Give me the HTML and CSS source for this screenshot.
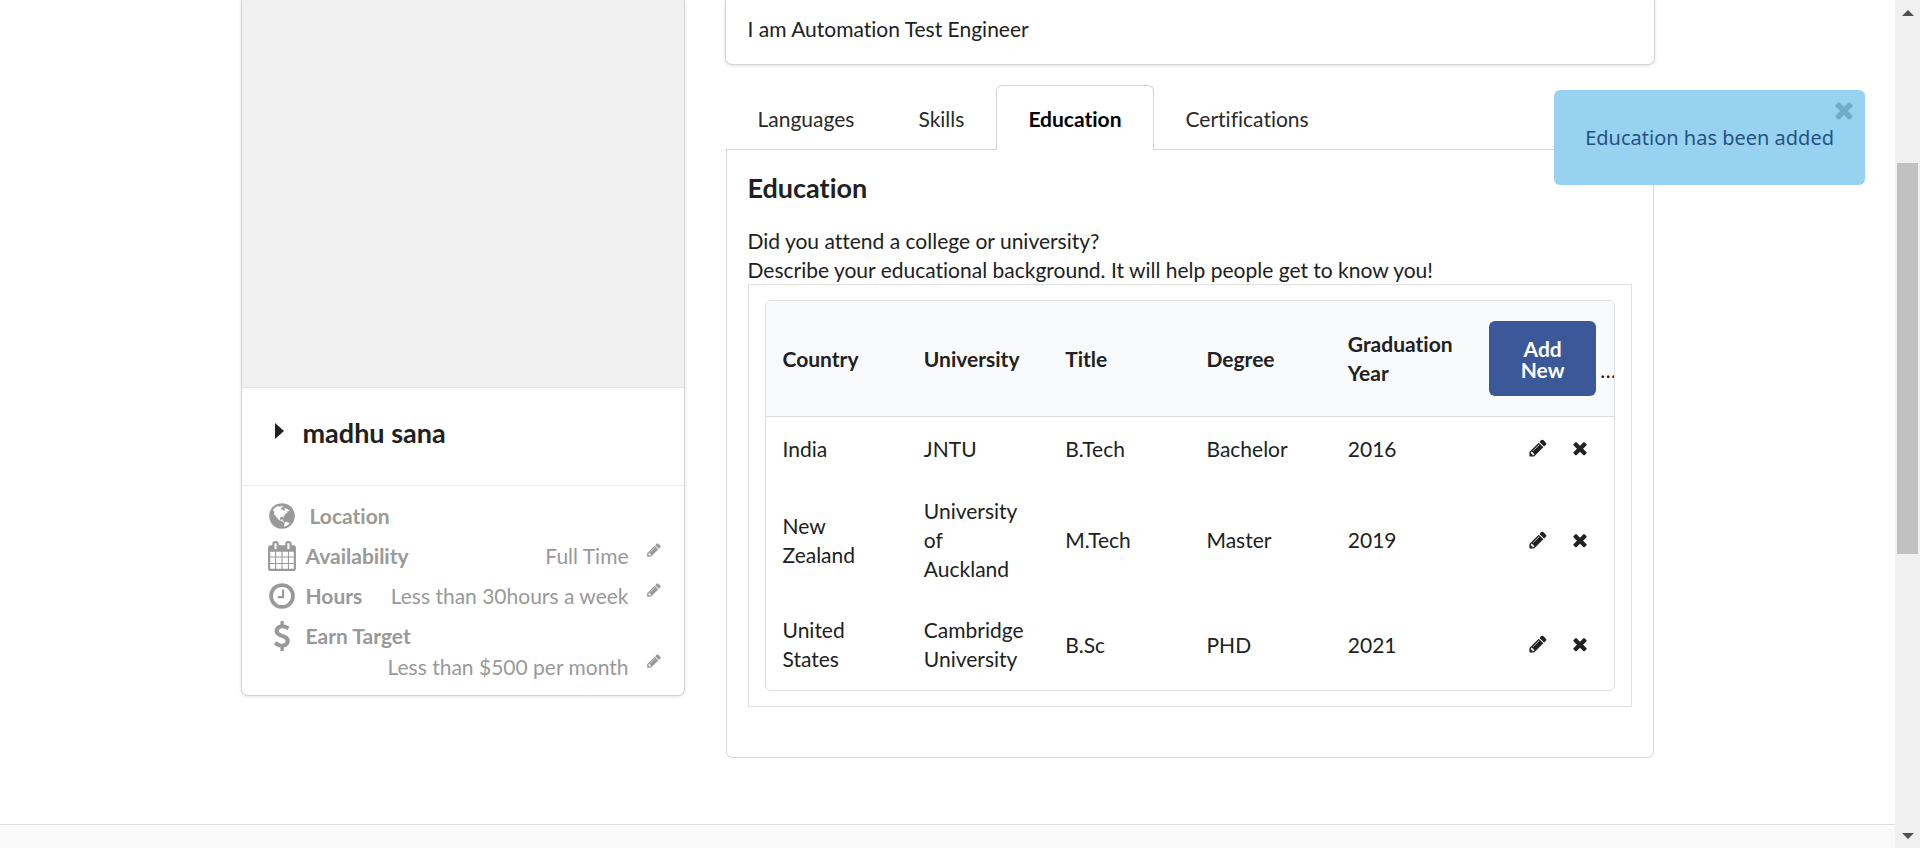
FILE: index.html
```html
<!DOCTYPE html>
<html lang="en">
<head>
<meta charset="utf-8">
<title>Profile</title>
<link rel="stylesheet" href="styles.css">
</head>
<body>
<svg class="sprite" aria-hidden="true">
  <symbol id="pencil" viewBox="0 0 1792 1792"><path d="M491 1536l91-91-235-235-91 91v107h128v128h107zm523-928q0-22-22-22-10 0-17 7l-542 542q-7 7-7 17 0 22 22 22 10 0 17-7l542-542q7-7 7-17zm-54-192l416 416-832 832h-416v-416zm683 96q0 53-37 90l-166 166-416-416 166-165q36-38 90-38 53 0 91 38l235 234q37 39 37 91z"/></symbol>
  <symbol id="close" viewBox="0 0 1792 1792"><path d="M1490 1322q0 40-28 68l-136 136q-28 28-68 28t-68-28l-294-294-294 294q-28 28-68 28t-68-28l-136-136q-28-28-28-68t28-68l294-294-294-294q-28-28-28-68t28-68l136-136q28-28 68-28t68 28l294 294 294-294q28-28 68-28t68 28l136 136q28 28 28 68t-28 68l-294 294 294 294q28 28 28 68z"/></symbol>
  <symbol id="clock" viewBox="0 0 1792 1792"><path d="M1024 544v448q0 14-9 23t-23 9h-320q-14 0-23-9t-9-23v-64q0-14 9-23t23-9h224v-352q0-14 9-23t23-9h64q14 0 23 9t9 23zm416 352q0-148-73-273t-198-198-273-73-273 73-198 198-73 273 73 273 198 198 273 73 273-73 198-198 73-273zm224 0q0 209-103 385.5t-279.5 279.5-385.5 103-385.5-103-279.5-279.5-103-385.5 103-385.5 279.5-279.5 385.5-103 385.5 103 279.5 279.5 103 385.5z"/></symbol>
  <symbol id="calendar" viewBox="0 0 1792 1792"><path d="M192 1664h288v-288h-288v288zm352 0h320v-288h-320v288zm-352-352h288v-320h-288v320zm352 0h320v-320h-320v320zm-352-384h288v-288h-288v288zm736 736h320v-288h-320v288zm-384-736h320v-288h-320v288zm768 736h288v-288h-288v288zm-384-352h320v-320h-320v320zm-352-864v-288q0-13-9.500-22.500t-22.500-9.500h-64q-13 0-22.500 9.500t-9.500 22.500v288q0 13 9.500 22.500t22.500 9.500h64q13 0 22.500-9.500t9.500-22.500zm736 864h288v-320h-288v320zm-384-384h320v-288h-320v288zm384 0h288v-288h-288v288zm32-480v-288q0-13-9.500-22.500t-22.500-9.500h-64q-13 0-22.500 9.500t-9.500 22.500v288q0 13 9.500 22.500t22.500 9.500h64q13 0 22.500-9.500t9.500-22.500zm384-64v1280q0 52-38 90t-90 38h-1408q-52 0-90-38t-38-90v-1280q0-52 38-90t90-38h128v-96q0-66 47-113t113-47h64q66 0 113 47t47 113v96h384v-96q0-66 47-113t113-47h64q66 0 113 47t47 113v96h128q52 0 90 38t38 90z"/></symbol>
  <symbol id="dollar" viewBox="0 0 1792 1792"><path d="M1362 1185q0 153-99.5 263.5t-258.5 136.500v175q0 14-9 23t-23 9h-135q-13 0-22.500-9.500t-9.500-22.500v-175q-66-9-127.500-31t-101.500-44.500-74-48-46.500-37.500-17.500-18q-17-21-2-41l103-135q7-10 23-12 15-2 24 9l2 2q113 99 243 125 37 8 74 8 81 0 142.500-43t61.500-122q0-28-15-53t-33.500-42-58.500-37.500-66-32-80-32.500q-39-16-61.500-25t-61.500-26.500-62.500-31-56.500-35.500-53.500-42.500-43.500-49-35.500-58-21-66.500-8.500-78q0-138 98-242t255-134v-180q0-13 9.500-22.500t22.500-9.500h135q14 0 23 9t9 23v176q57 6 110.500 23t87 33.500 63.500 37.500 39 29 15 14q17 18 5 38l-81 146q-8 15-23 16-14 3-27-7-3-3-14.500-12t-39-26.500-58.500-32-74.500-26-85.500-11.500q-95 0-155 43t-60 111q0 26 8.500 48t29.500 41.500 39.500 33 56 31 60.500 27 70 27.500q53 20 81 31.500t76 35 75.500 42.500 62 50 53 63.500 31.500 76.500 13 94z"/></symbol>
  <symbol id="globe" viewBox="0 0 1792 1792"><path d="M896 128q209 0 385.500 103t279.500 279.500 103 385.500-103 385.500-279.500 279.500-385.500 103-385.500-103-279.500-279.500-103-385.500 103-385.500 279.500-279.500 385.500-103zm274 521q-2 1-9.500 9.500t-13.500 9.500q2 0 4.500-5t5-11 3.500-7q6-7 22-15 14-6 52-12 34-8 51 11-2-2 9.500-13t14.500-12q3-2 15-4.500t15-7.500l2-22q-12 1-17.500-7t-6.500-21q0 2-6 8 0-7-4.500-8t-11.500 1-9 1q-10-3-15-7.500t-8-16.500-4-15q-2-5-9.500-11t-9.500-10q-1-2-2.500-5.500t-3-6.500-4-5.500-5.500-2.500-7 5-7.500 10-4.500 5q-3-2-6-1.500t-4.500 1-4.500 3-5 3.500q-3 2-8.500 3t-8.500 2q15-5-1-11-10-4-16-3 9-4 7.500-12t-8.500-14h5q-1-4-8.500-8.500t-17.500-8.500-13-6q-8-5-34-9.500t-33-.5q-5 6-4.500 10.500t4 14 3.500 12.500q1 6-5.500 13t-6.500 12q0 7 14 15.500t10 21.500q-3 8-16 16t-16 12q-5 8-1.500 18.500t10.500 16.500q2 2 1.500 4t-3.500 4.500-5.500 4-6.500 3.500l-3 2q-11 5-20.500-6t-13.500-26q-7-25-16-30-23-8-29 1-5-13-41-26-25-9-58-4 6-1 0-15-7-15-19-12 3-6 4-17.500t1-13.500q3-13 12-23 1-1 7-8.500t9.500-13.500.5-6q35 4 50-11 5-5 11.500-17t10.500-17q9-6 14-5.500t14.500 5.500 14.500 5q14 1 15.500-11t-7.500-20q12 1 3-17-4-7-8-9-12-4-27 5-8 4 2 8-1-1-9.500 10.500t-16.500 17.500-16-5q-1-1-5.500-13.500t-9.500-13.500q-8 0-16 15 3-8-11-15t-24-8q19-12-8-27-7-4-20.500-5t-19.500 4q-5 7-5.500 11.500t5 8 10.500 5.500 11.500 4 8.500 3q14 10 8 14-2 1-8.500 3.500t-11.500 4.500-6 4q-3 4 0 14t-2 14q-5-5-9-17.500t-7-16.500q7 9-25 6l-10-1q-4 0-16 2t-20.500 1-13.500-8q-4-8 0-20 1-4 4-2-4-3-11-9.500t-10-8.500q-46 15-94 41 6 1 12-1 5-2 13-6.500t10-5.500q34-14 42-7l5-5q14 16 20 25-7-4-30-1-20 6-22 12 7 12 5 18-4-3-11.500-10t-14.500-11-15-5q-16 0-22 1-146 80-235 222 7 7 12 8 4 1 5 9t2.500 11 11.500-3q9 8 3 19 1-1 44 27 19 17 21 21 3 11-10 18-1-2-9-9t-9-4q-3 5 .5 18.500t10.500 12.500q-7 0-9.500 16t-2.500 35.500-1 23.500l2 1q-3 12 5.500 34.500t21.500 19.500q-13 3 20 43 6 8 8 9 3 2 12 7.500t15 10 10 10.500q4 5 10 22.500t14 23.500q-2 6 9.500 20t10.500 23q-1 0-2.500 1t-2.500 1q3 7 15.500 14t15.500 13q1 3 2 10t3 11 8 2q2-20-24-62-15-25-17-29-3-5-5.500-15.500t-4.500-14.500q2 0 6 1.500t8.500 3.500 7.500 4 2 3q-3 7 2 17.500t12 18.500 17 19 12 13q6 6 14 19.500t0 13.500q9 0 20 10.500t17 19.500q5 8 8 26t5 24q2 7 8.500 13.500t12.500 9.500l16 8 13 7q5 2 18.500 10.500t21.500 11.500q10 4 16 4t14.500-2.500 13.500-3.500q15-2 29 15t21 21q36 19 55 11-2 1 .5 7.500t8 15.500 9 14.500 5.500 8.500q5 6 18 15t18 15q6-4 7-9-3 8 7 20t18 10q14-3 14-32-31 15-49-18 0-1-2.500-5.500t-4-8.500-2.500-8.500 0-7.500 5-3q9 0 10-3.500t-2-12.500-4-13q-1-8-11-20t-12-15q-5 9-16 8t-16-9q0 1-1.500 5.500t-1.500 6.500q-13 0-15-1 1-3 2.500-17.500t3.500-22.500q1-4 5.500-12t7.500-14.500 4-12.500-4.500-9.500-17.500-2.500q-19 1-26 20-1 3-3 10.500t-5 11.500-9 7q-7 3-24 2t-24-5q-13-8-22.500-29t-9.500-37q0-10 2.500-26.500t3-25-5.500-24.500q3-2 9-9.500t10-10.500q2-1 4.500-1.500t4.500 0 4-1.500 3-6q-1-1-4-3-3-3-4-3 7 3 28.500-1.500t27.500 1.500q15 11 22-2 0-1-2.500-9.500t-.5-13.500q5 27 29 9 3 3 15.500 5t17.500 5q3 2 7 5.500t5.500 4.500 5-.5 8.500-6.500q10 14 12 24 11 40 19 44 7 3 11 2t4.500-9.500 0-14-1.500-12.500l-1-8v-18l-1-8q-15-3-18.500-12t1.500-18.500 15-18.500q1-1 8-3.500t15.500-6.500 12.500-8q21-19 15-35 7 0 11-9-1 0-5-3t-7.500-5-4.500-2q9-5 2-16 5-3 7.500-11t7.500-10q9 12 21 2 7-8 1-16 5-7 20.500-10.500t18.500-9.500q7 2 8-2t1-12 3-12q4-5 15-9t13-5l17-11q3-4 0-4 18 2 31-11 10-11-6-20 3-6-3-9.500t-15-5.500q3-1 11.500-.5t10.500-1.500q15-10-7-16-17-5-43 12zm-163 877q206-36 351-189-3-3-12.500-4.500t-12.500-3.500q-18-7-24-8 1-7-2.500-13t-8-9-12.500-8-11-7q-2-2-7-6t-7-5.500-7.500-4.500-8.500-2-10 1l-3 1q-3 1-5.500 2.500t-5.500 3-4 3 0 2.500q-21-17-36-22-5-1-11-5.500t-10.500-7-10-1.500-11.500 7q-5 5-6 15t-2 13q-7-5 0-17.500t2-18.500q-3-6-10.500-4.500t-12 4.500-11.500 8.500-9 6.500-8.500 5.500-8.500 7.500q-3 4-6 12t-5 11q-2-4-11.500-6.500t-9.500-5.500q2 10 4 35t5 38q7 31-12 48-27 25-29 40-4 22 12 26 0 7-8 20.500t-7 21.500q0 6 2 16z"/></symbol>
</svg>

<div class="page">
  <main class="container">
    <section class="card profile">
      <div class="photo"></div>
      <div class="name"><span class="caret"></span><h2>madhu sana</h2></div>
      <ul class="details">
        <li class="location"><svg class="icon"><use href="#globe"/></svg><strong>Location</strong></li>
        <li><svg class="icon"><use href="#calendar"/></svg><strong>Availability</strong><span class="value">Full Time</span><button class="edit" aria-label="Edit availability"><svg><use href="#pencil"/></svg></button></li>
        <li><svg class="icon"><use href="#clock"/></svg><strong>Hours</strong><span class="value">Less than 30hours a week</span><button class="edit" aria-label="Edit hours"><svg><use href="#pencil"/></svg></button></li>
        <li class="earn"><svg class="icon"><use href="#dollar"/></svg><strong>Earn Target</strong></li>
        <li class="target"><span class="value">Less than $500 per month</span><button class="edit" aria-label="Edit earn target"><svg><use href="#pencil"/></svg></button></li>
      </ul>
    </section>

    <div class="content">
      <section class="card about"><p>I am Automation Test Engineer</p></section>

      <nav class="tabs">
        <a href="#languages">Languages</a>
        <a href="#skills">Skills</a>
        <a href="#education" class="active">Education</a>
        <a href="#certifications">Certifications</a>
      </nav>

      <section class="segment" id="education">
        <h3>Education</h3>
        <p>Did you attend a college or university?<br>Describe your educational background. It will help people get to know you!</p>
        <div class="table-box">
          <div class="table-frame">
            <table>
              <thead>
                <tr><th>Country</th><th>University</th><th>Title</th><th>Degree</th><th>Graduation Year</th><th class="action"><button class="add">Add New</button><span class="more">…</span></th></tr>
              </thead>
              <tbody>
                <tr><td>India</td><td>JNTU</td><td>B.Tech</td><td>Bachelor</td><td>2016</td><td><div class="tools"><button aria-label="Edit"><svg><use href="#pencil"/></svg></button><button aria-label="Delete"><svg><use href="#close"/></svg></button></div></td></tr>
                <tr><td>New Zealand</td><td>University of Auckland</td><td>M.Tech</td><td>Master</td><td>2019</td><td><div class="tools"><button aria-label="Edit"><svg><use href="#pencil"/></svg></button><button aria-label="Delete"><svg><use href="#close"/></svg></button></div></td></tr>
                <tr><td>United States</td><td>Cambridge University</td><td>B.Sc</td><td>PHD</td><td>2021</td><td><div class="tools"><button aria-label="Edit"><svg><use href="#pencil"/></svg></button><button aria-label="Delete"><svg><use href="#close"/></svg></button></div></td></tr>
              </tbody>
            </table>
          </div>
        </div>
      </section>
    </div>
  </main>
  <footer class="footer"></footer>
  <div class="toast" role="status">Education has been added<button aria-label="Close"><svg><use href="#close"/></svg></button></div>
</div>

<div class="scrollbar" aria-hidden="true">
  <div class="arrow up"></div>
  <div class="track-before"></div>
  <div class="thumb"></div>
  <div class="track-after"></div>
  <div class="arrow down"></div>
</div>
</body>
</html>
```
FILE: styles.css
```css
* { box-sizing: border-box; }

body {
  margin: 0;
  display: flex;
  height: 100vh;
  overflow: hidden;
  background: #fff;
  color: #212121;
  font: 21px/29px Lato, "Liberation Sans", sans-serif;
  font-variant-ligatures: none;
}

h2, h3, p, ul { margin: 0; padding: 0; }
h2, h3 { font-size: 27px; line-height: 34px; font-weight: 700; }
button { margin: 0; padding: 0; border: 0; background: none; color: inherit; font: inherit; cursor: pointer; }
svg { display: block; fill: currentColor; }
.sprite { display: none; }

.page {
  position: relative;
  flex: 1;
  min-width: 0;
  display: flex;
  flex-direction: column;
}

.container {
  flex: 1;
  display: grid;
  grid-template-columns: 442fr 928fr;
  column-gap: 42px;
  align-items: start;
  width: 100%;
  max-width: 1412px;
  margin: 0 auto;
}

.card {
  background: #fff;
  border-radius: 0 0 6px 6px;
  box-shadow: 0 1px 4px 0 #d4d4d5, 0 0 0 1px #d4d4d5;
}

/* Profile card */
.photo { height: 388px; background: #f1f1f1; border-bottom: 1px solid #e4e4e4; }
.name {
  display: flex;
  align-items: center;
  gap: 19px;
  height: 98px;
  padding: 0 33px 8px;
  border-bottom: 1px solid #ececec;
}
.caret {
  border: 8px solid transparent;
  border-left: 9px solid #212121;
  border-right: 0;
  margin-bottom: 3px;
}
.details { list-style: none; padding: 9px 22px 18px 25px; color: #999; }
.details li { display: flex; align-items: center; height: 40px; }
.icon { width: 30px; height: 32px; margin: 2px 9px 0 0; }
.location .icon { margin-right: 13px; }
.value { margin-left: auto; }
.edit { margin: 0 0 10px 17px; }
.edit svg { width: 16px; height: 16px; }
.details .target { height: 22px; }

/* About and tabs */
.about { height: 64px; padding: 14px 22px; }
.tabs { display: flex; margin-top: 21px; }
.tabs a {
  padding: 17px 31px 15px;
  border: 1px solid transparent;
  border-bottom: 0;
  color: #2a2a2a;
  line-height: 31px;
  text-decoration: none;
}
.tabs .active {
  margin-bottom: -1px;
  border-color: #d4d4d5;
  border-radius: 6px 6px 0 0;
  background: #fff;
  color: #000;
  font-weight: 700;
}

.segment {
  padding: 21px 21px 50px;
  border: 1px solid #d4d4d5;
  border-radius: 0 0 6px 6px;
}
.segment p { margin-top: 21px; }
.table-box { border: 1px solid #e0e0e0; padding: 15px 16px; }
.table-frame { overflow: hidden; border: 1px solid #dedede; border-radius: 6px; }

table { width: 100%; table-layout: fixed; border-collapse: collapse; }
th, td { padding: 16px 17px; text-align: left; vertical-align: middle; }
th { height: 115px; padding: 12px 17px; background: #f9fafb; border-bottom: 1px solid #dedede; font-weight: 700; }
td { height: 64px; }
tr:last-child td { padding-bottom: 17px; }
.action { padding-right: 0; white-space: nowrap; overflow: hidden; }
.add {
  width: 107px;
  padding: 17px 24px 16px;
  border-radius: 6px;
  background: #3b5998;
  color: #fff;
  font-weight: 700;
  line-height: 21px;
  white-space: normal;
}
.more { margin-left: 4px; font-weight: 400; }
.tools { display: flex; justify-content: flex-end; gap: 22px; padding-right: 7px; }
.tools svg { width: 20px; height: 20px; }

/* Notification */
.toast {
  position: absolute;
  top: 90px;
  right: 30px;
  padding: 33px 31px;
  border-radius: 6px;
  background: #97d2f0;
  color: #27527f;
  font-family: "Noto Sans", "Open Sans", sans-serif;
  font-size: 20px;
}
.toast button { position: absolute; top: 7px; right: 8px; color: #6faccb; }
.toast svg { width: 26px; height: 26px; }

.footer { height: 24px; background: #f9f9f9; border-top: 1px solid #dedede; }

/* Scrollbar */
.scrollbar { display: flex; flex-direction: column; width: 25px; padding: 0 2px; background: #f0f0f0; }
.arrow { display: flex; align-items: center; justify-content: center; height: 25px; }
.arrow::before { content: ""; border: 6px solid transparent; }
.up::before { border-top: 0; border-bottom: 6px solid #505050; }
.down::before { border-bottom: 0; border-top: 6px solid #505050; }
.track-before { flex: 138; }
.thumb { flex: 391; background: #c1c1c1; }
.track-after { flex: 269; }
```
